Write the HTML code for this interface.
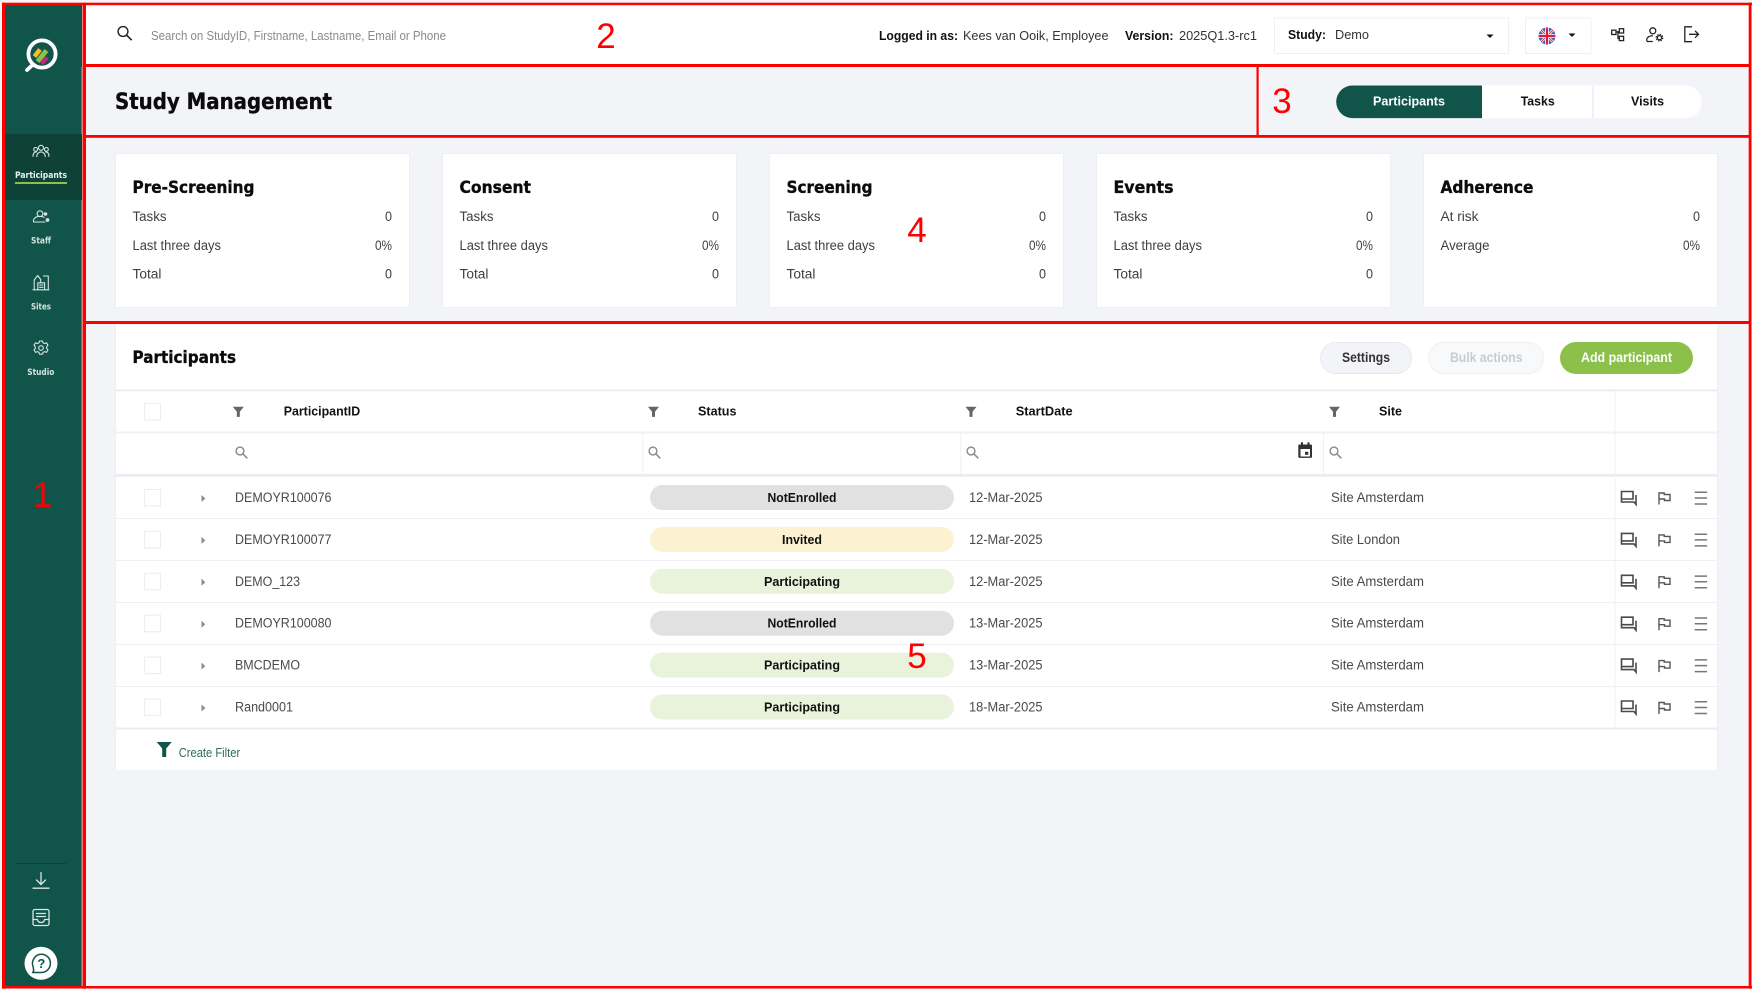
<!DOCTYPE html>
<html lang="en"><head><meta charset="utf-8"><title>Study Management</title>
<style>
html,body{margin:0;padding:0;background:#f3f4f8;width:1752px;height:989px;overflow:hidden}
svg{display:block}
text{font-family:"Liberation Sans",sans-serif}
.h{font-family:"DejaVu Sans",sans-serif;font-weight:700;fill:#0b0b0b;stroke:#0b0b0b;stroke-width:.35px}
.nav{font-family:"DejaVu Sans",sans-serif;font-weight:700;font-size:8.6px;fill:#d5e3df}
.r{font-size:13.5px;fill:#4a4a4a}
.c{font-size:13.5px;fill:#404040}
.b{font-size:13px;font-weight:700;fill:#111}
.t{font-size:13px;fill:#333}
.n{font-size:35px;fill:#f00}
.ln{stroke:#d8e6e2;stroke-width:1.1;fill:none;stroke-linecap:round;stroke-linejoin:round}
.tb{stroke:#222;stroke-width:1.3;fill:none}
.ri{fill:none}
</style></head><body>
<svg xmlns="http://www.w3.org/2000/svg" width="1752" height="989" viewBox="0 0 1752 989">
<defs>
<g id="fn"><path d="M0 0h11l-4 5v5.2h-3v-5.2z" fill="#666"/></g>
<g id="sr"><circle cx="5" cy="5" r="3.9" fill="none" stroke="#888" stroke-width="1.4"/><path d="M8 8l4.300 4.300" stroke="#888" stroke-width="1.5"/></g>
<g id="ck"><rect x="144.5" y="489.5" width="16" height="16.5" fill="#fff" stroke="#eceef2" stroke-width="1.2"/></g>
<g id="ca"><path d="M201.5 495v7l3.8-3.5z" fill="#8a8a8a"/></g>
<g id="ic">
<path class="ri" stroke="#4a4a4a" stroke-width="1.6" d="M1621.5 491.5h11.500v7.500h-11.500zM1621.500 499v3h12.500l2 2.500v-9.500"/>
<path class="ri" stroke="#555" stroke-width="1.4" d="M1659 504.500v-11.500h5.200v1.500h5.800v6h-5.500v-1.500h-5.500"/>
<path class="ri" stroke="#777" stroke-width="1.5" d="M1694.700 492.300h12.400M1694.700 498h12.400M1694.700 504h12.400"/>
</g>
</defs>

<rect width="1752" height="989" fill="#f3f4f8"/>

<!-- Sidebar -->
<rect x="4" y="4" width="78" height="984" fill="#10544a"/>
<rect x="81.700" y="67" width="1" height="920" fill="#e3ecea"/>
<clipPath id="lg"><circle cx="42" cy="54" r="12"/></clipPath>
<g clip-path="url(#lg)">
<path d="M34.500 56.500L40 49.500" stroke="#f5c02e" stroke-width="4.500"/>
<path d="M37.500 61.500L46.500 50.500" stroke="#8cc24a" stroke-width="4.800"/>
<path d="M41.500 63.500L47 57.500" stroke="#c2277e" stroke-width="4.500"/>
</g>
<circle cx="42" cy="54" r="13.600" fill="none" stroke="#fff" stroke-width="3.800"/>
<path d="M32.500 65L27 70" stroke="#fff" stroke-width="3.800" stroke-linecap="round"/>

<rect x="5" y="134" width="77" height="66" fill="#0e4238"/>
<g class="ln">
<circle cx="41" cy="147.800" r="2.500"/><circle cx="35.600" cy="149.400" r="1.900"/><circle cx="46.400" cy="149.400" r="1.900"/>
<path d="M36.800 156.600c0-6.200 8.400-6.200 8.400 0M33 156.400c0-3.600 1.500-4.500 3.400-4.500M49 156.400c0-3.600-1.500-4.500-3.400-4.500"/>
</g>
<text class="nav" x="15" y="178" textLength="52" lengthAdjust="spacingAndGlyphs" style="fill:#e8f2ef">Participants</text>
<rect x="15" y="182" width="52" height="2" fill="#8cc24a"/>

<g class="ln">
<circle cx="40" cy="213.700" r="2.900"/>
<path d="M33.500 222h11.500M33.500 222c-.6-4 3-5.700 6.500-5.700 1.600 0 3 .3 4.200 1"/>
</g>
<circle cx="45.500" cy="214" r="1.800" fill="#d8e6e2"/><circle cx="47.500" cy="220" r="1.900" fill="#d8e6e2"/>
<text class="nav" x="31" y="243.700" textLength="20" lengthAdjust="spacingAndGlyphs">Staff</text>

<g class="ln">
<path d="M33 289.800h16M34.200 289.800v-9.800l3.500-4.500 3 4v2.500M43.500 276h4.800v13.800M37.800 289.800v-7h6.800v7M39.500 285h3.500M39.500 287.300h3.500"/>
</g>
<text class="nav" x="31" y="309.700" textLength="20" lengthAdjust="spacingAndGlyphs">Sites</text>

<g class="ln">
<circle cx="41" cy="348" r="2.300"/>
<path d="M39.500 341h3l.5 1.800 1.700.8 1.800-.8 1.500 2.500-1.300 1.400v1.800l1.300 1.400-1.500 2.500-1.800-.8-1.700.8-.5 1.800h-3l-.5-1.800-1.700-.8-1.800.8-1.500-2.500 1.300-1.400v-1.800l-1.300-1.400 1.500-2.500 1.800.8 1.700-.8z"/>
</g>
<text class="nav" x="27.300" y="375" textLength="27" lengthAdjust="spacingAndGlyphs">Studio</text>

<rect x="16" y="863" width="50" height="1" fill="#0d4239"/>
<g class="ln" style="stroke-width:1.300">
<path d="M41 872.500v11.500M36.500 880l4.500 4.500 4.500-4.500M33 888.200h16"/>
<rect x="33" y="909.500" width="16" height="16" rx="1.800"/>
<path d="M36.500 913.500h9M36.500 916.500h9M33 919.500h4.500c.3 2.500 1.800 3 3.500 3s3.200-.5 3.500-3H49"/>
</g>
<circle cx="41" cy="963.300" r="16.500" fill="#fff"/>
<path d="M33.200 967c-2.500-5.500 1.700-12.800 8-12.800 5.200 0 9.200 4 9.200 9.100s-4 9.200-9.200 9.200h-8.400l.9-1.900z" fill="none" stroke="#10544a" stroke-width="1.500"/>
<text x="41.300" y="968" text-anchor="middle" style="font-size:13px;font-weight:700;fill:#10544a">?</text>

<!-- Top bar -->
<rect x="86" y="5" width="1663" height="59" fill="#fff"/>
<circle cx="123" cy="31.500" r="4.900" fill="none" stroke="#222" stroke-width="1.400"/>
<path d="M126.700 35.200l5 5" stroke="#222" stroke-width="1.600"/>
<text x="151" y="40" textLength="295" lengthAdjust="spacingAndGlyphs" style="font-size:12.500px;fill:#8a8a8a">Search on StudyID, Firstname, Lastname, Email or Phone</text>

<text class="b" x="879" y="40" textLength="79" lengthAdjust="spacingAndGlyphs">Logged in as:</text>
<text class="t" x="963" y="40" textLength="145.500" lengthAdjust="spacingAndGlyphs">Kees van Ooik, Employee</text>
<text class="b" x="1125" y="40" textLength="48.500" lengthAdjust="spacingAndGlyphs">Version:</text>
<text class="t" x="1179" y="40" textLength="78" lengthAdjust="spacingAndGlyphs">2025Q1.3-rc1</text>

<rect x="1274.500" y="18" width="234" height="35.500" fill="#fff" stroke="#eff0f4"/>
<text class="b" x="1288" y="39" textLength="38" lengthAdjust="spacingAndGlyphs">Study:</text>
<text class="t" x="1335" y="39" textLength="34" lengthAdjust="spacingAndGlyphs">Demo</text>
<path d="M1486.500 34.500h7l-3.500 3.500z" fill="#111"/>

<rect x="1525.500" y="18" width="65.500" height="35.500" fill="#fff" stroke="#eff0f4"/>
<clipPath id="fl"><circle cx="1547" cy="36" r="8.500"/></clipPath>
<g clip-path="url(#fl)">
<rect x="1538" y="27" width="18" height="18" fill="#3b62c4"/>
<path d="M1538 27l18 18M1556 27l-18 18" stroke="#fff" stroke-width="2.500"/>
<path d="M1538 27l18 18M1556 27l-18 18" stroke="#d9344a" stroke-width="1"/>
<path d="M1547 27v18M1538 36h18" stroke="#fff" stroke-width="3.800"/>
<path d="M1547 27v18M1538 36h18" stroke="#d9203a" stroke-width="2.200"/>
</g>
<path d="M1568.500 33.500h7l-3.500 3.500z" fill="#111"/>

<g class="tb">
<rect x="1611.700" y="30.200" width="4.300" height="4.300"/>
<rect x="1619.300" y="28.700" width="4.300" height="4.300"/>
<rect x="1619.300" y="36.300" width="4.300" height="4.300"/>
<path d="M1616 32h3.300M1618 31v7.500h1.300"/>
<circle cx="1652.800" cy="30.800" r="3"/>
<path d="M1646.800 41.300v-1.800c0-2.500 3.200-3.800 6-3.800M1646.800 41.500h6"/>
<circle cx="1659.500" cy="37.700" r="2.100"/>
<circle cx="1659.500" cy="37.700" r="3.300" stroke-dasharray="1.500 1.100" stroke-width="1.200"/>
<path d="M1692 26.800h-7.200v14.900h7.200M1689 34.300h9.500M1695 30.800l3.500 3.500-3.500 3.500"/>
</g>

<!-- Title bar -->
<text class="h" x="115" y="109" textLength="217" lengthAdjust="spacingAndGlyphs" style="font-size:22px">Study Management</text>

<path d="M1482 85.500h-129.500a16.300 16.300 0 0 0 0 32.600H1482z" fill="#10544a"/>
<path d="M1482 85.500h203.500a16.300 16.300 0 0 1 0 32.600H1482z" fill="#fff"/>
<rect x="1592" y="85.500" width="1.500" height="32.600" fill="#eceef2"/>
<text x="1373" y="105.500" textLength="72" lengthAdjust="spacingAndGlyphs" style="font-size:13px;font-weight:700;fill:#fff">Participants</text>
<text class="b" x="1520.700" y="105.500" textLength="34" lengthAdjust="spacingAndGlyphs">Tasks</text>
<text class="b" x="1631" y="105.500" textLength="33" lengthAdjust="spacingAndGlyphs">Visits</text>

<!-- Cards -->
<g fill="#fff" stroke="#edeff3">
<rect x="115.500" y="153.500" width="294" height="154"/>
<rect x="442.500" y="153.500" width="294" height="154"/>
<rect x="769.500" y="153.500" width="294" height="154"/>
<rect x="1096.500" y="153.500" width="294" height="154"/>
<rect x="1423.500" y="153.500" width="294" height="154"/>
</g>

<text class="h" x="132.500" y="193" textLength="122" lengthAdjust="spacingAndGlyphs" style="font-size:16.500px">Pre-Screening</text>
<text class="c" x="132.500" y="221" textLength="34" lengthAdjust="spacingAndGlyphs">Tasks</text>
<text class="c" x="132.500" y="250" textLength="88.500" lengthAdjust="spacingAndGlyphs">Last three days</text>
<text class="c" x="132.500" y="278.500" textLength="29" lengthAdjust="spacingAndGlyphs">Total</text>
<text class="c" x="392" y="221" text-anchor="end" textLength="7" lengthAdjust="spacingAndGlyphs">0</text>
<text class="c" x="392" y="250" text-anchor="end" textLength="17" lengthAdjust="spacingAndGlyphs">0%</text>
<text class="c" x="392" y="278.500" text-anchor="end" textLength="7" lengthAdjust="spacingAndGlyphs">0</text>

<text class="h" x="459.500" y="193" textLength="71.500" lengthAdjust="spacingAndGlyphs" style="font-size:16.500px">Consent</text>
<text class="c" x="459.500" y="221" textLength="34" lengthAdjust="spacingAndGlyphs">Tasks</text>
<text class="c" x="459.500" y="250" textLength="88.500" lengthAdjust="spacingAndGlyphs">Last three days</text>
<text class="c" x="459.500" y="278.500" textLength="29" lengthAdjust="spacingAndGlyphs">Total</text>
<text class="c" x="719" y="221" text-anchor="end" textLength="7" lengthAdjust="spacingAndGlyphs">0</text>
<text class="c" x="719" y="250" text-anchor="end" textLength="17" lengthAdjust="spacingAndGlyphs">0%</text>
<text class="c" x="719" y="278.500" text-anchor="end" textLength="7" lengthAdjust="spacingAndGlyphs">0</text>

<text class="h" x="786.500" y="193" textLength="86" lengthAdjust="spacingAndGlyphs" style="font-size:16.500px">Screening</text>
<text class="c" x="786.500" y="221" textLength="34" lengthAdjust="spacingAndGlyphs">Tasks</text>
<text class="c" x="786.500" y="250" textLength="88.500" lengthAdjust="spacingAndGlyphs">Last three days</text>
<text class="c" x="786.500" y="278.500" textLength="29" lengthAdjust="spacingAndGlyphs">Total</text>
<text class="c" x="1046" y="221" text-anchor="end" textLength="7" lengthAdjust="spacingAndGlyphs">0</text>
<text class="c" x="1046" y="250" text-anchor="end" textLength="17" lengthAdjust="spacingAndGlyphs">0%</text>
<text class="c" x="1046" y="278.500" text-anchor="end" textLength="7" lengthAdjust="spacingAndGlyphs">0</text>

<text class="h" x="1113.500" y="193" textLength="60" lengthAdjust="spacingAndGlyphs" style="font-size:16.500px">Events</text>
<text class="c" x="1113.500" y="221" textLength="34" lengthAdjust="spacingAndGlyphs">Tasks</text>
<text class="c" x="1113.500" y="250" textLength="88.500" lengthAdjust="spacingAndGlyphs">Last three days</text>
<text class="c" x="1113.500" y="278.500" textLength="29" lengthAdjust="spacingAndGlyphs">Total</text>
<text class="c" x="1373" y="221" text-anchor="end" textLength="7" lengthAdjust="spacingAndGlyphs">0</text>
<text class="c" x="1373" y="250" text-anchor="end" textLength="17" lengthAdjust="spacingAndGlyphs">0%</text>
<text class="c" x="1373" y="278.500" text-anchor="end" textLength="7" lengthAdjust="spacingAndGlyphs">0</text>

<text class="h" x="1440.500" y="193" textLength="93" lengthAdjust="spacingAndGlyphs" style="font-size:16.500px">Adherence</text>
<text class="c" x="1440.500" y="221" textLength="38" lengthAdjust="spacingAndGlyphs">At risk</text>
<text class="c" x="1440.500" y="250" textLength="49" lengthAdjust="spacingAndGlyphs">Average</text>
<text class="c" x="1700" y="221" text-anchor="end" textLength="7" lengthAdjust="spacingAndGlyphs">0</text>
<text class="c" x="1700" y="250" text-anchor="end" textLength="17" lengthAdjust="spacingAndGlyphs">0%</text>

<!-- Participants panel -->
<rect x="115.500" y="324" width="1602" height="447" fill="#fff" stroke="#edeff3"/>
<text class="h" x="132.500" y="363" textLength="103.500" lengthAdjust="spacingAndGlyphs" style="font-size:16.500px">Participants</text>

<rect x="1320.500" y="342.500" width="91" height="31" rx="15.500" fill="#f3f4f8" stroke="#e8e9ee"/>
<text x="1342" y="362" textLength="48" lengthAdjust="spacingAndGlyphs" style="font-size:13.500px;font-weight:700;fill:#333">Settings</text>
<rect x="1428.500" y="342.500" width="115" height="31" rx="15.500" fill="#f8f9fb" stroke="#eff0f4"/>
<text x="1450" y="362" textLength="72.500" lengthAdjust="spacingAndGlyphs" style="font-size:13.500px;font-weight:700;fill:#c9cbce">Bulk actions</text>
<rect x="1560" y="342" width="133" height="32" rx="16" fill="#8bc14a"/>
<text x="1581" y="362" textLength="91" lengthAdjust="spacingAndGlyphs" style="font-size:13.500px;font-weight:700;fill:#fff">Add participant</text>

<!-- Table chrome -->
<rect x="116" y="389.500" width="1601" height="1.800" fill="#e9ebf0"/>
<rect x="116" y="431.500" width="1601" height="2" fill="#f0f1f5"/>
<rect x="116" y="474" width="1601" height="2.800" fill="#ebecf1"/>
<rect x="116" y="727.500" width="1601" height="2" fill="#ebecf1"/>
<g fill="#eef0f4">
<rect x="116" y="518" width="1601" height="1"/><rect x="116" y="560" width="1601" height="1"/>
<rect x="116" y="602" width="1601" height="1"/><rect x="116" y="644" width="1601" height="1"/>
<rect x="116" y="686" width="1601" height="1"/>
<rect x="642.300" y="433" width="1" height="41"/><rect x="960.300" y="433" width="1" height="41"/><rect x="1323" y="433" width="1" height="41"/>
<rect x="1614.500" y="391" width="1" height="337"/>
</g>

<rect x="144.500" y="403.500" width="16" height="16.500" fill="#fff" stroke="#eceef2" stroke-width="1.200"/>
<use href="#fn" x="232.800" y="406.700"/>
<text class="b" x="283.700" y="415.700" textLength="76.500" lengthAdjust="spacingAndGlyphs">ParticipantID</text>
<use href="#fn" x="648" y="406.700"/>
<text class="b" x="698" y="415.700" textLength="38.500" lengthAdjust="spacingAndGlyphs">Status</text>
<use href="#fn" x="965.500" y="406.700"/>
<text class="b" x="1015.700" y="415.700" textLength="57" lengthAdjust="spacingAndGlyphs">StartDate</text>
<use href="#fn" x="1329" y="406.700"/>
<text class="b" x="1379" y="415.700" textLength="23" lengthAdjust="spacingAndGlyphs">Site</text>

<use href="#sr" x="235" y="446"/><use href="#sr" x="648" y="446"/><use href="#sr" x="966" y="446"/><use href="#sr" x="1329" y="446"/>
<path d="M1299.500 444.500h1.500v-2.300h2v2.300h4.500v-2.300h2v2.300h1.300a1.200 1.200 0 0 1 1.200 1.200v11a1.200 1.200 0 0 1-1.200 1.200h-11.300a1.200 1.200 0 0 1-1.200-1.200v-11a1.200 1.200 0 0 1 1.200-1.200z" fill="#333"/>
<rect x="1300.500" y="449" width="9.500" height="7.500" fill="#fff"/><rect x="1305" y="451.800" width="3.300" height="3" fill="#333"/>

<!-- Row 1 -->
<g>
<use href="#ck"/><use href="#ca"/>
<text class="r" x="235" y="502" textLength="96.500" lengthAdjust="spacingAndGlyphs">DEMOYR100076</text>
<rect x="650" y="485" width="304" height="25" rx="12.500" fill="#e1e1e1"/>
<text class="b" x="767.500" y="502" textLength="69" lengthAdjust="spacingAndGlyphs">NotEnrolled</text>
<text class="r" x="969" y="502" textLength="73.500" lengthAdjust="spacingAndGlyphs">12-Mar-2025</text>
<text class="r" x="1331" y="502" textLength="93" lengthAdjust="spacingAndGlyphs">Site Amsterdam</text>
<use href="#ic"/>
</g>
<!-- Row 2 -->
<g transform="translate(0,41.900)">
<use href="#ck"/><use href="#ca"/>
<text class="r" x="235" y="502" textLength="96.500" lengthAdjust="spacingAndGlyphs">DEMOYR100077</text>
<rect x="650" y="485" width="304" height="25" rx="12.500" fill="#fcf1d0"/>
<text class="b" x="782" y="502" textLength="40" lengthAdjust="spacingAndGlyphs">Invited</text>
<text class="r" x="969" y="502" textLength="73.500" lengthAdjust="spacingAndGlyphs">12-Mar-2025</text>
<text class="r" x="1331" y="502" textLength="69" lengthAdjust="spacingAndGlyphs">Site London</text>
<use href="#ic"/>
</g>
<!-- Row 3 -->
<g transform="translate(0,83.800)">
<use href="#ck"/><use href="#ca"/>
<text class="r" x="235" y="502" textLength="65" lengthAdjust="spacingAndGlyphs">DEMO_123</text>
<rect x="650" y="485" width="304" height="25" rx="12.500" fill="#e9f2db"/>
<text class="b" x="764" y="502" textLength="76" lengthAdjust="spacingAndGlyphs">Participating</text>
<text class="r" x="969" y="502" textLength="73.500" lengthAdjust="spacingAndGlyphs">12-Mar-2025</text>
<text class="r" x="1331" y="502" textLength="93" lengthAdjust="spacingAndGlyphs">Site Amsterdam</text>
<use href="#ic"/>
</g>
<!-- Row 4 -->
<g transform="translate(0,125.700)">
<use href="#ck"/><use href="#ca"/>
<text class="r" x="235" y="502" textLength="96.500" lengthAdjust="spacingAndGlyphs">DEMOYR100080</text>
<rect x="650" y="485" width="304" height="25" rx="12.500" fill="#e1e1e1"/>
<text class="b" x="767.500" y="502" textLength="69" lengthAdjust="spacingAndGlyphs">NotEnrolled</text>
<text class="r" x="969" y="502" textLength="73.500" lengthAdjust="spacingAndGlyphs">13-Mar-2025</text>
<text class="r" x="1331" y="502" textLength="93" lengthAdjust="spacingAndGlyphs">Site Amsterdam</text>
<use href="#ic"/>
</g>
<!-- Row 5 -->
<g transform="translate(0,167.600)">
<use href="#ck"/><use href="#ca"/>
<text class="r" x="235" y="502" textLength="65" lengthAdjust="spacingAndGlyphs">BMCDEMO</text>
<rect x="650" y="485" width="304" height="25" rx="12.500" fill="#e9f2db"/>
<text class="b" x="764" y="502" textLength="76" lengthAdjust="spacingAndGlyphs">Participating</text>
<text class="r" x="969" y="502" textLength="73.500" lengthAdjust="spacingAndGlyphs">13-Mar-2025</text>
<text class="r" x="1331" y="502" textLength="93" lengthAdjust="spacingAndGlyphs">Site Amsterdam</text>
<use href="#ic"/>
</g>
<!-- Row 6 -->
<g transform="translate(0,209.500)">
<use href="#ck"/><use href="#ca"/>
<text class="r" x="235" y="502" textLength="58" lengthAdjust="spacingAndGlyphs">Rand0001</text>
<rect x="650" y="485" width="304" height="25" rx="12.500" fill="#e9f2db"/>
<text class="b" x="764" y="502" textLength="76" lengthAdjust="spacingAndGlyphs">Participating</text>
<text class="r" x="969" y="502" textLength="73.500" lengthAdjust="spacingAndGlyphs">18-Mar-2025</text>
<text class="r" x="1331" y="502" textLength="93" lengthAdjust="spacingAndGlyphs">Site Amsterdam</text>
<use href="#ic"/>
</g>

<path d="M156.700 742h15l-5.500 6.500v8.500h-4v-8.500z" fill="#10544a"/>
<text x="178.700" y="757" textLength="61.500" lengthAdjust="spacingAndGlyphs" style="font-size:12.500px;fill:#2c6a60">Create Filter</text>

<!-- Red annotation frames -->
<g fill="#f00">
<rect x="2" y="2.700" width="1750" height="2.500"/>
<rect x="2" y="2.700" width="3.200" height="986"/>
<rect x="1748.700" y="2.700" width="2.800" height="986"/>
<rect x="2" y="986" width="1750" height="2.500"/>
<rect x="82.500" y="2.700" width="3.500" height="986"/>
<rect x="86" y="64" width="1663" height="3"/>
<rect x="86" y="135" width="1663" height="2.800"/>
<rect x="86" y="321" width="1663" height="3"/>
<rect x="1256.500" y="67" width="2.200" height="68"/>
</g>
<text class="n" x="42.500" y="507" text-anchor="middle">1</text>
<text class="n" x="606" y="48" text-anchor="middle">2</text>
<text class="n" x="1282" y="113" text-anchor="middle">3</text>
<text class="n" x="917" y="242" text-anchor="middle">4</text>
<text class="n" x="917" y="668" text-anchor="middle">5</text>
</svg>
</body></html>
